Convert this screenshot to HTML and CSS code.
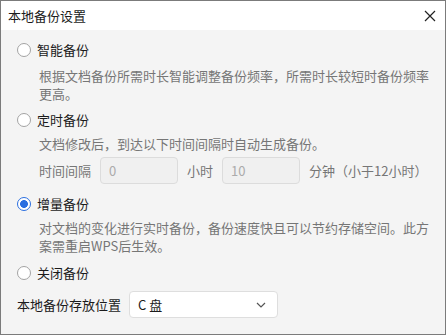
FILE: index.html
```html
<!DOCTYPE html>
<html lang="zh-CN">

<head>
    <meta charset="UTF-8">
    <meta name="viewport" content="width=device-width, initial-scale=1.0">
    <title>本地备份设置</title>

    <link rel="stylesheet" href="styles.css">
</head>

<body>
    <div class="window">
        <div class="titlebar">
            <span class="title">本地备份设置</span>
            <svg class="close" width="12" height="12" viewBox="0 0 12 12">
                <path d="M1 1 L11 11 M11 1 L1 11" stroke="#222" stroke-width="1.2" fill="none" />
            </svg>
        </div>

        <div class="content">
            <!-- 智能备份 -->
            <label class="option first">
                <span class="radio"></span>
                <span>智能备份</span>
            </label>
            <p class="desc">根据文档备份所需时长智能调整备份频率，所需时长较短时备份频率更高。</p>

            <!-- 定时备份 -->
            <label class="option opt-timed">
                <span class="radio"></span>
                <span>定时备份</span>
            </label>
            <p class="desc desc-timed">文档修改后，到达以下时间间隔时自动生成备份。</p>
            <div class="interval">
                <span class="sub-label">时间间隔</span>
                <div class="num-input">0</div>
                <span class="sub-label">小时</span>
                <div class="num-input">10</div>
                <span class="sub-label">分钟（小于12小时）</span>
            </div>

            <!-- 增量备份 -->
            <label class="option opt-inc">
                <span class="radio checked"></span>
                <span>增量备份</span>
            </label>
            <p class="desc desc-inc">对文档的变化进行实时备份，备份速度快且可以节约存储空间。此方案需重启WPS后生效。</p>

            <!-- 关闭备份 -->
            <label class="option opt-off">
                <span class="radio"></span>
                <span>关闭备份</span>
            </label>

            <div class="location">
                <span class="loc-label">本地备份存放位置</span>
                <div class="select">
                    <span>C 盘</span>
                    <svg width="10" height="6" viewBox="0 0 10 6">
                        <path d="M1 1 L5 5 L9 1" stroke="#555" stroke-width="1.2" fill="none" />
                    </svg>
                </div>
            </div>
        </div>
    </div>
</body>

</html>
```

FILE: styles.css
```css
* {
    box-sizing: border-box;
}

body {
    margin: 0;
    font-family: "Noto Sans CJK SC", "Noto Sans", sans-serif;
    font-size: 13px;
    color: #1b1b1b;
}

.window {
    width: 446px;
    height: 335px;
    border: 1px solid #7b7b7b;
    display: flex;
    flex-direction: column;
}

/* 标题栏 */
.titlebar {
    height: 29px;
    background: #fff;
    display: flex;
    align-items: center;
    justify-content: space-between;
    padding: 0 9px 0 7px;
    flex-shrink: 0;
}

.title {
    font-size: 13px;
    line-height: 20px;
}

.close {
    display: block;
}

/* 内容区 */
.content {
    flex: 1;
    background: #f4f4f4;
    padding: 10px 16px 0;
}

.option {
    display: flex;
    align-items: center;
    gap: 6px;
    height: 20px;
    line-height: 20px;
}

.radio {
    width: 14px;
    height: 14px;
    border-radius: 50%;
    border: 1px solid #a3a3a3;
    background: #fff;
    flex-shrink: 0;
}

.radio.checked {
    border: 1.5px solid #2b6fe0;
    background: radial-gradient(circle, #2b6fe0 0 3.6px, #fff 4.2px);
}

.desc {
    margin: 7px 0 0;
    padding-left: 22px;
    color: #767676;
    line-height: 18px;
}

.opt-timed {
    margin-top: 7px;
}

.desc-timed {
    margin-top: 5px;
}

.interval {
    display: flex;
    align-items: center;
    gap: 9px;
    margin-top: 4px;
    padding-left: 22px;
}

.sub-label {
    color: #767676;
}

.num-input {
    width: 78px;
    height: 27px;
    border: 1px solid #dcdcdc;
    border-radius: 4px;
    background: #f0f0f0;
    color: #ababab;
    padding-left: 8px;
    line-height: 25px;
}

.opt-inc {
    margin-top: 10px;
}

.desc-inc {
    margin-top: 5px;
}

.opt-off {
    margin-top: 8px;
}

/* 存放位置 */
.location {
    display: flex;
    align-items: center;
    gap: 8px;
    margin-top: 8px;
}

.select {
    width: 149px;
    height: 27px;
    background: #fff;
    border: 1px solid #dedede;
    border-radius: 4px;
    display: flex;
    align-items: center;
    justify-content: space-between;
    padding: 0 11px 0 8px;
}
```
